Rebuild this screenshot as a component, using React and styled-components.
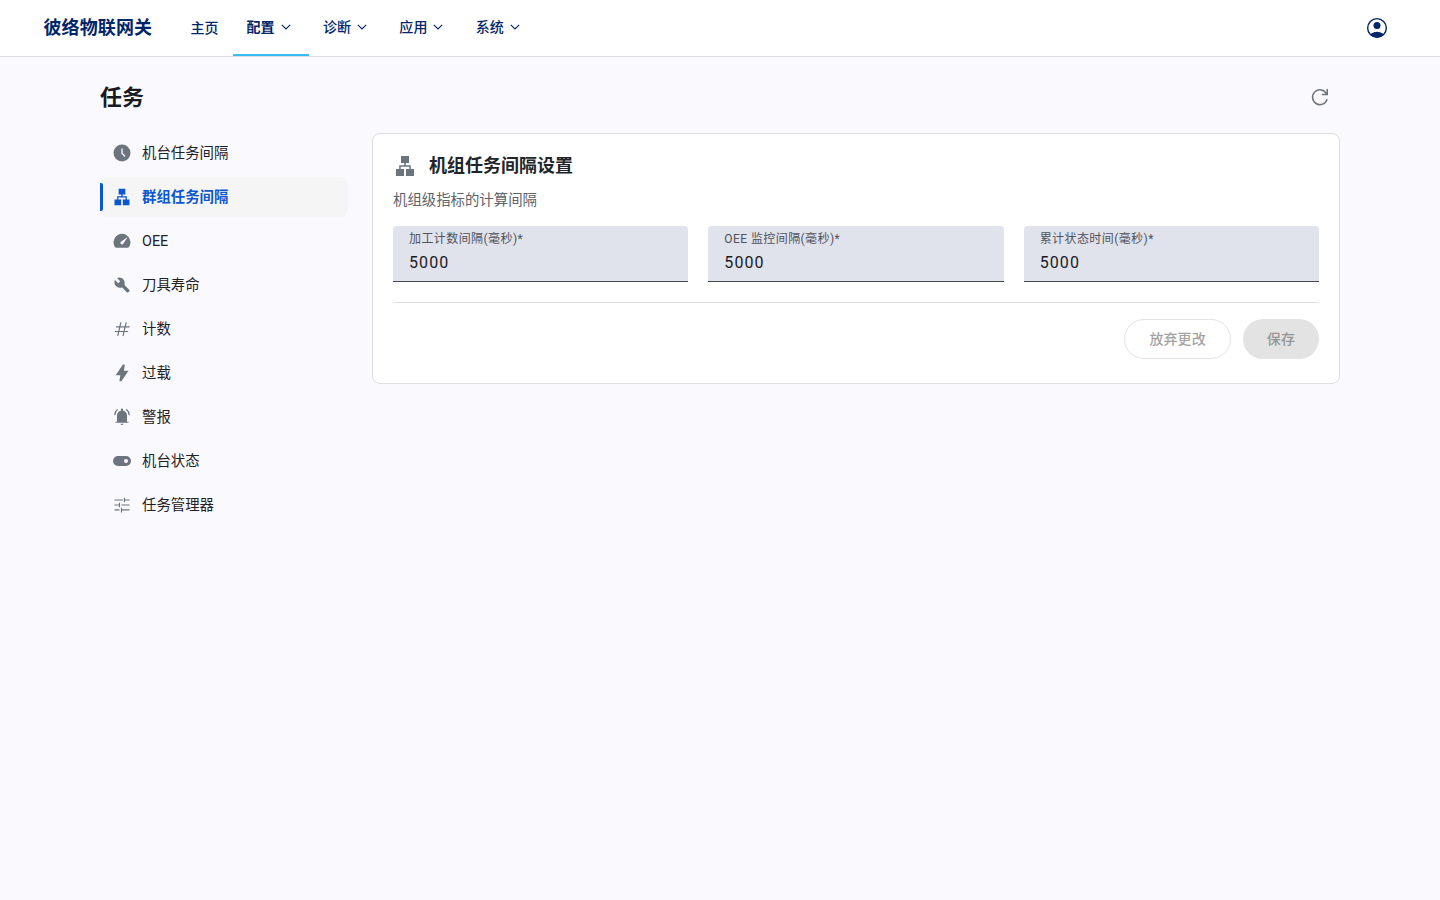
import React from 'react';
import styled, { createGlobalStyle, css } from 'styled-components';

const Global = createGlobalStyle`
  *, *::before, *::after { box-sizing: border-box; }
  html, body { margin: 0; min-height: 100%; background: #faf9fe; }
  body, button, input { font-family: Roboto, 'Noto Sans CJK SC', sans-serif; }
  body { color: #1a1b1f; }
  svg { display: block; flex: none; }
`;

const Header = styled.header`
  height: 57px;
  display: flex;
  align-items: stretch;
  padding: 0 51px 0 43.5px;
  background: #fff;
  border-bottom: 1px solid #dedede;
  color: #002569;
`;
const Brand = styled.div`
  width: 132.5px;
  font-size: 18px;
  font-weight: 700;
  line-height: 56px;
  letter-spacing: 0.1px;
  white-space: nowrap;
`;
const Nav = styled.nav`
  flex: 1;
  display: flex;
`;
const NavItem = styled.a`
  display: flex;
  align-items: center;
  gap: 4px;
  padding: ${(p) => (p.$plain ? '2px 14px 0 14.5px' : '0 16.4px 0 13.8px')};
  border-bottom: 2px solid ${(p) => (p.$active ? '#38bdf8' : 'transparent')};
  font-size: 14px;
  line-height: 20px;
  font-weight: ${(p) => (p.$active ? 700 : 500)};
  letter-spacing: 0.1px;
  white-space: nowrap;
`;
const Account = styled.button`
  display: flex;
  align-items: center;
  padding: 0 0 1px;
  border: 0;
  background: none;
  color: inherit;
`;

const Page = styled.main`
  width: 1240px;
  margin: 0 auto;
  padding-top: 20px;
`;
const PageHead = styled.div`
  height: 40px;
  display: flex;
  align-items: center;
  justify-content: space-between;
  padding-right: 8px;
  color: #6c757d;
`;
const PageTitle = styled.h1`
  margin: 0;
  padding-top: 2px;
  font-size: 22px;
  line-height: 28px;
  font-weight: 700;
  color: #1a1b1f;
`;
const Columns = styled.div`
  display: grid;
  grid-template-columns: 248px 968px;
  gap: 24px;
  align-items: start;
  padding-top: 16px;
`;
const Side = styled.ul`
  margin: 0;
  padding: 0;
  list-style: none;
  display: flex;
  flex-direction: column;
  gap: 4px;
`;
const SideItem = styled.li`
  position: relative;
  height: 40px;
  display: flex;
  align-items: center;
  gap: 10px;
  padding-left: 12px;
  border-radius: 8px;
  font-size: 14.4px;
  line-height: 20px;
  color: #1f2125;
  svg { color: #6c757d; }
  ${(p) =>
    p.$active &&
    css`
      background: #f5f5f5;
      color: #0b57d0;
      font-weight: 700;
      svg { color: #0b57d0; }
      &::before {
        content: '';
        position: absolute;
        left: 0;
        top: 6px;
        bottom: 6px;
        width: 3px;
        background: #0b57d0;
        border-radius: 0 2px 2px 0;
      }
    `}
`;
const SideLabel = styled.span`
  padding-top: 2px;
`;

const Card = styled.section`
  height: 251px;
  padding: 16px 20px 24px;
  background: #fff;
  border: 1px solid #dedede;
  border-radius: 8px;
`;
const CardHead = styled.div`
  display: flex;
  align-items: center;
  gap: 12px;
  height: 32px;
  color: #6c757d;
`;
const CardTitle = styled.h2`
  margin: 0;
  font-size: 18px;
  line-height: 28px;
  font-weight: 700;
  color: #212529;
`;
const Hint = styled.p`
  margin: 8px 0 14px;
  font-size: 14.4px;
  line-height: 22px;
  color: #5c636a;
`;
const Fields = styled.div`
  display: grid;
  grid-template-columns: repeat(3, 1fr);
  gap: 20px;
`;
const FieldBox = styled.label`
  height: 56px;
  display: flex;
  flex-direction: column;
  padding: 4px 16px 0;
  background: #e0e2ec;
  border-bottom: 1px solid #44474e;
  border-radius: 4px 4px 0 0;
`;
const FieldLabel = styled.span`
  font-size: 12px;
  line-height: 18px;
  letter-spacing: 0.42px;
  color: #50535a;
  white-space: nowrap;
`;
const FieldInput = styled.input`
  width: 100%;
  height: 24px;
  margin-top: 2px;
  padding: 0;
  border: 0;
  outline: 0;
  background: none;
  font-size: 16px;
  letter-spacing: 1.1px;
  color: #1a1b1f;
`;
const Actions = styled.div`
  display: flex;
  justify-content: flex-end;
  gap: 12px;
  margin-top: 20px;
  padding-top: 16px;
  border-top: 1px solid #dedede;
`;
const Button = styled.button`
  height: 40px;
  padding: 0 24px;
  border-radius: 20px;
  border: ${(p) => (p.$filled ? '0' : '1px solid #e3e3e3')};
  background: ${(p) => (p.$filled ? '#e3e3e3' : 'transparent')};
  color: ${(p) => (p.$filled ? '#969696' : '#a3a3a3')};
  font-size: 14px;
  line-height: 20px;
  font-weight: 500;
  letter-spacing: 0.1px;
`;

const Svg = ({ size = 20, box = 20, children }) => (
  <svg width={size} height={size} viewBox={`0 0 ${box} ${box}`} fill="currentColor">
    {children}
  </svg>
);
const Chevron = () => (
  <svg width="14" height="14" viewBox="0 0 14 14" fill="none" stroke="currentColor" strokeWidth="1.15">
    <path d="M2.8 4.9 7 9l4.200-4.100" />
  </svg>
);
const AccountIcon = () => (
  <Svg size={24} box={24}>
    <clipPath id="ring"><circle cx="12" cy="12" r="9.6" /></clipPath>
    <circle cx="12" cy="12" r="9.35" fill="none" stroke="currentColor" strokeWidth="1.4" />
    <circle cx="12" cy="9.4" r="3.5" />
    <ellipse cx="12" cy="21" rx="7.6" ry="5.2" clipPath="url(#ring)" />
  </Svg>
);
const RefreshIcon = () => (
  <svg width="24" height="24" viewBox="0 0 24 24" fill="none" stroke="currentColor" strokeWidth="1.5">
    <path d="M19.1 14.2A7.4 7.4 0 1 1 18.6 8.9M19.25 4v5.5h-5.5" />
  </svg>
);
const LanIcon = ({ size }) => (
  <Svg size={size} box={24}>
    <path d="M3 22v-6.9h3.2v-3.9h5V8.9H8V2h8v6.9h-3.2v2.3h5v3.9H21V22h-8v-6.9h3.3v-2.4H7.7v2.4H11V22z" />
  </Svg>
);
const ClockIcon = () => (
  <Svg>
    <circle cx="10" cy="10" r="8.5" />
    <path d="M10 5.5v4.7l3 3.3" fill="none" stroke="#faf9fe" strokeWidth="1.3" />
  </Svg>
);
const GaugeIcon = () => (
  <Svg>
    <path d="M4.2 16.7Q3.5 16.7 3 16A8.45 8.45 0 1 1 17 16Q16.5 16.7 15.8 16.7Z" />
    <path d="M8.8 12.9Q7.9 11.8 8.9 10.7L15.8 5.9 11.2 12.8Q10 13.9 8.8 12.900Z" fill="#faf9fe" />
  </Svg>
);
const WrenchIcon = () => (
  <Svg>
    <path d="M14.8 17.2 10.200 12.500Q9 12.900 7.600 12.700 5.500 12.500 4 11 2.400 9.400 2.400 7.400 2.400 6.200 3 5.100L6.200 8.300 8.200 6.300 5 3.100Q6.200 2.400 7.500 2.400 9.600 2.400 11.100 4 12.600 5.500 12.700 7.600 12.800 8.900 12.500 10.100L17.200 14.800Q18 15.600 17.200 16.400L16.400 17.200Q15.600 18 14.800 17.200Z" />
  </Svg>
);
const HashIcon = () => (
  <Svg>
    <path d="M8.9 3.3 5.7 17M14.2 3.3 11 17M4 7.8h13.7M2.7 12.5h13.4" fill="none" stroke="currentColor" strokeWidth="1.15" />
  </Svg>
);
const BoltIcon = () => (
  <Svg>
    <path d="M7.4 18.3 8.3 12.300H3.700L10.900 1.500h1.900L11.900 7.700h4.600L9.400 18.300z" />
  </Svg>
);
const BellIcon = () => (
  <Svg>
    <path d="M3.500 15.800v-1.100h1.500V8.500a5 5 0 0 1 3.900-4.800V2.500a1.100 1.100 0 0 1 2.200 0v1.200A5 5 0 0 1 15 8.500v6.200h1.500v1.100zM8.600 16.800h2.800a1.400 1.300 0 0 1-2.800 0z" />
    <path d="M2.800 8.200Q2.900 4.600 5.600 2.300M17.200 8.200Q17.100 4.600 14.400 2.300" fill="none" stroke="currentColor" strokeWidth="1.150" />
  </Svg>
);
const ToggleIcon = () => (
  <Svg>
    <path fillRule="evenodd" d="M6 5h8a5 5 0 0 1 0 10H6A5 5 0 0 1 6 5zm8 3a2 2 0 1 0 0 4 2 2 0 0 0 0-4z" />
  </Svg>
);
const TuneIcon = () => (
  <Svg>
    <path d="M2.500 5h8.500M12.500 2.700v4.600M12.500 5h5M2.500 10h5M7.500 7.700v4.600M9.500 10h8M2.500 14.900h5M9.500 12.700v4.800M9.500 14.900h8" fill="none" stroke="currentColor" strokeWidth="1.150" />
  </Svg>
);

const menu = ['配置', '诊断', '应用', '系统'];
const tasks = [
  ['机台任务间隔', ClockIcon],
  ['群组任务间隔', LanIcon],
  ['OEE', GaugeIcon],
  ['刀具寿命', WrenchIcon],
  ['计数', HashIcon],
  ['过载', BoltIcon],
  ['警报', BellIcon],
  ['机台状态', ToggleIcon],
  ['任务管理器', TuneIcon],
];
const fields = ['加工计数间隔(毫秒)*', 'OEE 监控间隔(毫秒)*', '累计状态时间(毫秒)*'];

export default function App() {
  return (
    <>
      <Global />
      <Header>
        <Brand>彼络物联网关</Brand>
        <Nav>
          <NavItem $plain>主页</NavItem>
          {menu.map((name, i) => (
            <NavItem key={name} $active={i === 0}>
              {name}
              <Chevron />
            </NavItem>
          ))}
        </Nav>
        <Account><AccountIcon /></Account>
      </Header>
      <Page>
        <PageHead>
          <PageTitle>任务</PageTitle>
          <RefreshIcon />
        </PageHead>
        <Columns>
          <Side>
            {tasks.map(([name, Icon], i) => (
              <SideItem key={name} $active={i === 1}>
                <Icon size={20} />
                <SideLabel>{name}</SideLabel>
              </SideItem>
            ))}
          </Side>
          <Card>
            <CardHead>
              <LanIcon size={24} />
              <CardTitle>机组任务间隔设置</CardTitle>
            </CardHead>
            <Hint>机组级指标的计算间隔</Hint>
            <Fields>
              {fields.map((label) => (
                <FieldBox key={label}>
                  <FieldLabel>{label}</FieldLabel>
                  <FieldInput defaultValue="5000" />
                </FieldBox>
              ))}
            </Fields>
            <Actions>
              <Button disabled>放弃更改</Button>
              <Button $filled disabled>保存</Button>
            </Actions>
          </Card>
        </Columns>
      </Page>
    </>
  );
}
